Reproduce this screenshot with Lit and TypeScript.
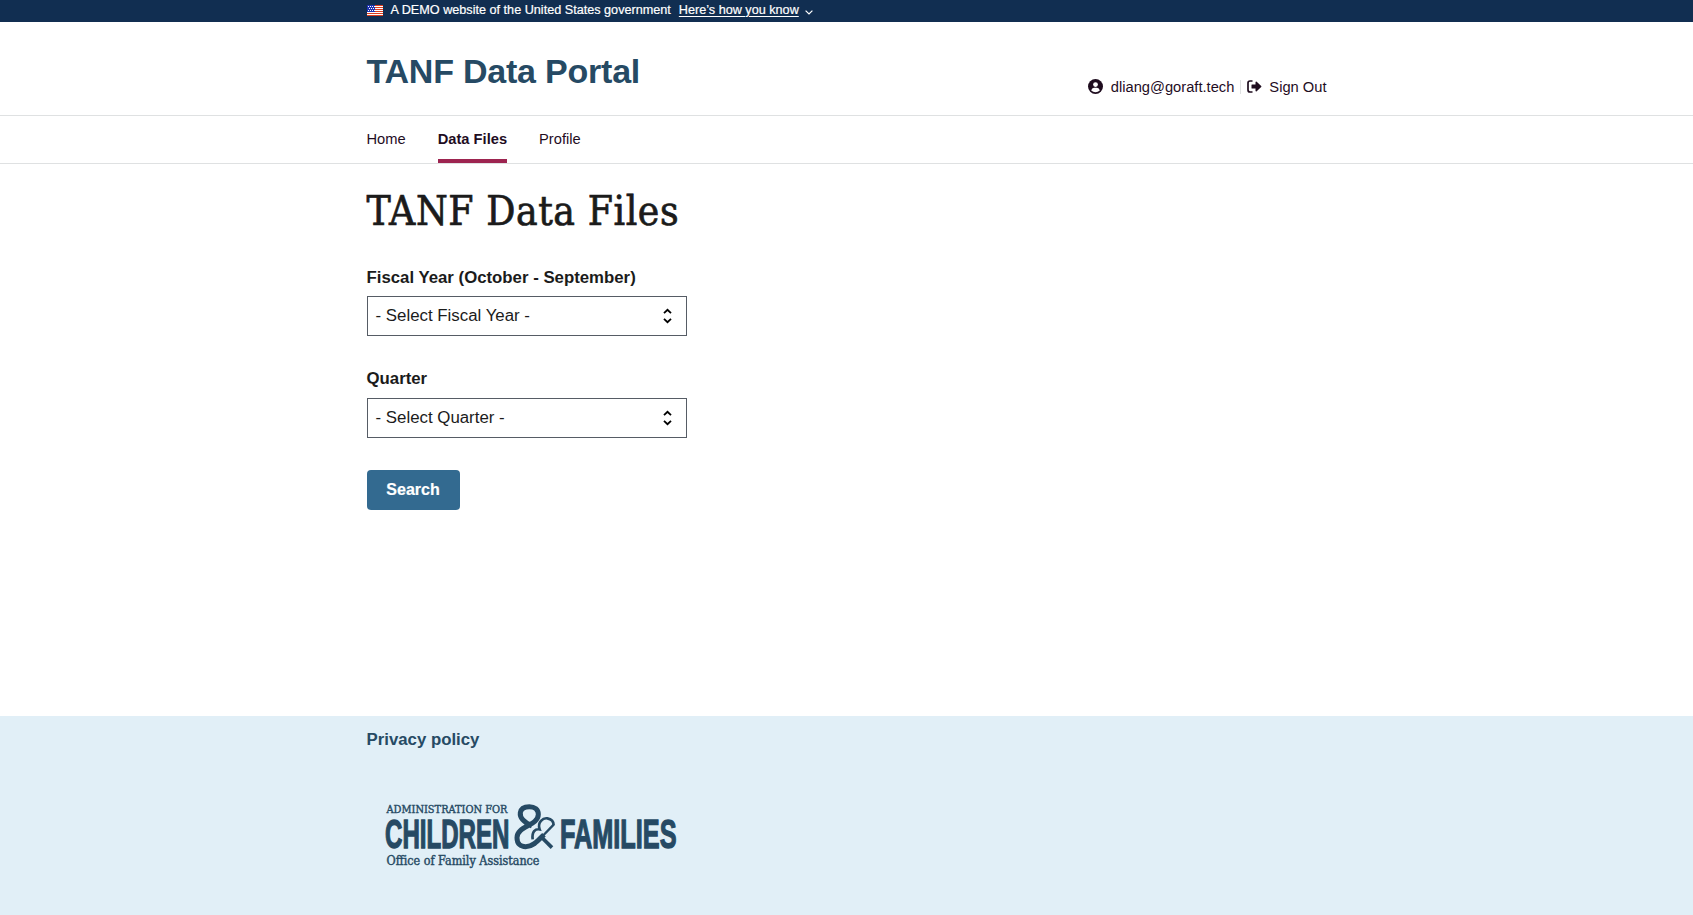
import { LitElement, html, css } from "lit";
import { customElement } from "lit/decorators.js";

@customElement("app-root")
export class AppRoot extends LitElement {
  static styles = css`
    :host { display: flex; flex-direction: column; height: 915px; background: #fff; color: #1b1b1b; font-family: "Liberation Sans", Arial, sans-serif; }
    .wrap { width: 960px; margin: 0 auto; }
    .banner { background: #112e51; height: 22px; color: #fff; font-size: 12.65px; -webkit-text-stroke: .2px #fff; }
    .banner .wrap { display: flex; height: 20px; align-items: center; line-height: 16px; }
    .flag { display: block; margin: 1px 7.5px 0 .5px; }
    .how { margin-left: 8px; text-decoration: underline; text-underline-offset: 2px; }
    .down { margin: 4px 0 0 6px; }
    .head { height: 93px; border-bottom: 1px solid #dfe1e2; }
    .head .wrap { display: flex; justify-content: space-between; }
    .title { font-size: 34px; letter-spacing: -.22px; font-weight: 700; color: #264a64; line-height: 40px; margin-top: 29px; }
    .user { display: flex; align-items: center; margin-top: 55px; height: 19px; line-height: 19px; font-size: 14.7px; color: #1f0d1f; }
    .user svg { display: block; }
    .user span { padding-top: 1px; }
    .mail { margin: 0 6px 0 8px; }
    .user .sep { width: 1px; height: 14px; padding: 0; background: #dfe1e2; margin-right: 6px; }
    .out { margin-left: 7px; }
    .nav { height: 47px; border-bottom: 1px solid #dfe1e2; font-size: 14.7px; color: #1f0d1f; }
    .nav .wrap { display: flex; gap: 32px; height: 47px; }
    .item { line-height: 46px; height: 43px; }
    .on { font-weight: 700; border-bottom: 4px solid #9d2450; }
    .main { flex: 1; }
    h1 { margin: 20px 0 0; font: 400 40.4px/54px "DejaVu Serif Condensed", "DejaVu Serif", serif; white-space: nowrap; letter-spacing: .58px; -webkit-text-stroke: .7px #1b1b1b; }
    .label { font-weight: 700; font-size: 16.8px; line-height: 22px; }
    .l1 { margin-top: 28px; line-height: 23px; }
    .l1 + .select { margin-top: 7px; }
    .l2 { margin-top: 32px; }
    .select { box-sizing: border-box; width: 320px; height: 40px; margin-top: 8px; border: 1px solid #565c65; display: flex; align-items: center; justify-content: space-between; padding: 0 13.5px 0 8px; font-size: 16.85px; }
    .btn { display: block; border: 0; border-radius: 4px; background: #336a90; color: #fff; font: 700 16px/16px "Liberation Sans", Arial, sans-serif; width: 93px; height: 40px; margin-top: 32px; padding: 0 0 1px; -webkit-text-stroke: .2px #fff; }
    .foot { height: 199px; background: #e1eff7; color: #264a64; }
    .privacy { font-weight: 700; font-size: 16.8px; line-height: 20px; padding-top: 14px; }
    .logo { display: block; margin: 44px 0 0 12.5px; overflow: visible; }
    .slab { font-family: "DejaVu Serif Condensed", "DejaVu Serif", serif; stroke: #264a64; stroke-width: .4; }
    .cond { font: 700 40px "Liberation Sans", Arial, sans-serif; stroke: #264a64; stroke-width: 1.3; }
  `;

  select(text: string) {
    return html`<div class="select"><span>${text}</span>
      <svg width="9" height="16" viewBox="0 0 9 16" fill="none" stroke="#000" stroke-width="1.8"><path d="M1 5.2 4.5 1.8 8 5.2M1 10.8 4.5 14.2 8 10.8"/></svg></div>`;
  }

  render() {
    return html`
      <div class="banner"><div class="wrap">
        <svg class="flag" width="16" height="11" viewBox="0 0 16 11"><rect width="16" height="11" fill="#fff"/><path d="M0 .5H16M0 2.5H16M0 4.5H16M0 6.5H16M0 8.5H16M0 10.5H16" stroke="#db3e1f"/><rect width="8" height="7" fill="#1e33b1"/><path d="M1 1.5H8M2 3.5H8M1 5.5H8" stroke="#fff" stroke-dasharray="1 1"/></svg>
        <span class="gov">A DEMO website of the United States government</span><span class="how">Here’s how you know</span>
        <svg class="down" width="8" height="5" viewBox="0 0 8 5" fill="none" stroke="#fff" stroke-width="1.2"><path d="M.6.6 4 4 7.4.6"/></svg>
      </div></div>
      <div class="head"><div class="wrap">
        <div class="title">TANF Data Portal</div>
        <div class="user">
          <svg width="15" height="15" viewBox="0 0 15 15"><circle cx="7.5" cy="7.5" r="7.5" fill="#1f0d1f"/><circle cx="7.5" cy="5.6" r="2.4" fill="#fff"/><path d="M3.2 11.4Q3.8 8.8 6 8.8H9Q11.2 8.8 11.8 11.4Q10 13.2 7.5 13.2T3.2 11.4Z" fill="#fff"/></svg>
          <span class="mail">dliang@goraft.tech</span><span class="sep"></span>
          <svg width="15" height="13" viewBox="0 0 15 13"><path d="M5.5 1H3Q1 1 1 3V10Q1 12 3 12H5.5" fill="none" stroke="#1f0d1f" stroke-width="1.7"/><path d="M4.5 5Q4.5 4.5 5 4.5H8.5V2.2Q8.8 1.2 9.7 1.8L14.2 6Q14.7 6.5 14.2 7L9.7 11.2Q8.8 11.8 8.5 10.8V8.5H5Q4.5 8.5 4.5 8Z" fill="#1f0d1f"/></svg>
          <span class="out">Sign Out</span>
        </div>
      </div></div>
      <div class="nav"><div class="wrap"><span class="item">Home</span><span class="item on">Data Files</span><span class="item">Profile</span></div></div>
      <div class="main"><div class="wrap">
        <h1>TANF Data Files</h1>
        <div class="label l1">Fiscal Year (October - September)</div>
        ${this.select("- Select Fiscal Year -")}
        <div class="label l2">Quarter</div>
        ${this.select("- Select Quarter -")}
        <button class="btn">Search</button>
      </div></div>
      <div class="foot"><div class="wrap">
        <div class="privacy">Privacy policy</div>
        <svg class="logo" width="310" height="90" viewBox="379 794 310 90" fill="#264a64">
          <text class="slab" x="386.5" y="813" font-size="11.5" textLength="121" lengthAdjust="spacingAndGlyphs">ADMINISTRATION FOR</text>
          <text class="cond" x="385" y="848" textLength="124.5" lengthAdjust="spacingAndGlyphs">CHILDREN</text>
          <text class="cond" x="560" y="848" textLength="116.5" lengthAdjust="spacingAndGlyphs">FAMILIES</text>
          <text class="slab" x="386.5" y="865" font-size="12" textLength="153" lengthAdjust="spacingAndGlyphs">Office of Family Assistance</text>
          <g transform="translate(350 700) scale(.33333)" fill="none" stroke="#264a64">
            <path d="M546 378C520 366 509 352 511 338C513 324 526 320 538 320C554 320 565 329 565 343C565 377 501 378 501 413C501 432 512 440 527 440C549 440 564 422 582 404" stroke-width="15"/>
            <path d="M578 408 611 374" stroke-width="7"/>
            <path d="M548 418C545 395 556 386 569 388C561 366 580 353 592 355C605 357 611 365 611 376" stroke-width="8"/>
            <path d="M574 411 606 443" stroke-width="11"/>
          </g>
        </svg>
      </div></div>`;
  }
}
